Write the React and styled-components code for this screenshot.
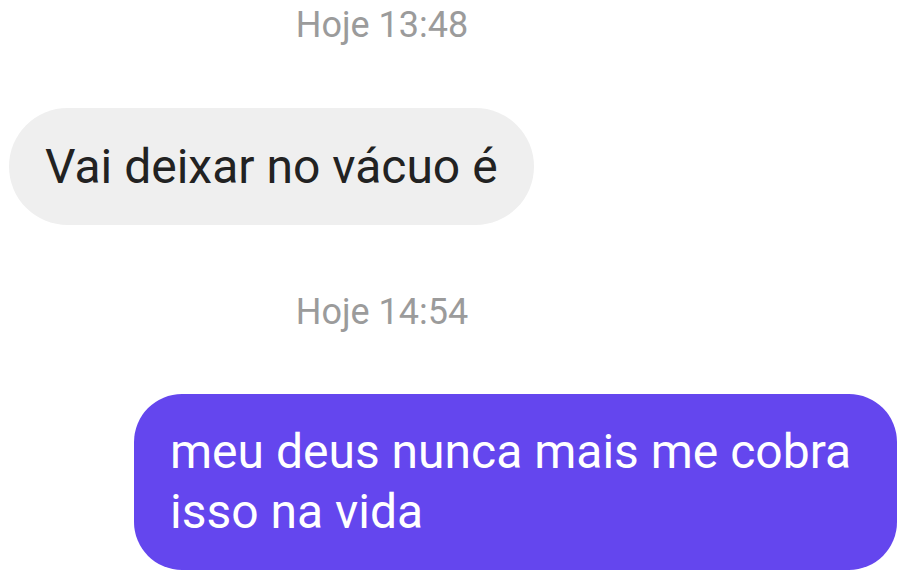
import React from "react";
import styled, { createGlobalStyle } from "styled-components";

const Global = createGlobalStyle`
  html, body { margin: 0; padding: 0; background: #ffffff; }
  body { font-family: Roboto, "Noto Sans", "Liberation Sans", sans-serif; }
`;

const Thread = styled.div`
  display: flex;
  flex-direction: column;
  width: 921px;
  height: 585px;
  overflow: hidden;
  padding-top: 4px;
  box-sizing: border-box;
`;

const Stamp = styled.div`
  font-size: 36px;
  line-height: 1.2;
  color: #9b9b9b;
  text-align: center;
  padding-right: 157px;
  margin-top: ${(p) => p.$top || 0}px;
`;

const Row = styled.div`
  display: flex;
  justify-content: ${(p) => (p.$mine ? "flex-end" : "flex-start")};
  padding: ${(p) => (p.$mine ? "0 24px 0 0" : "0 0 0 9px")};
  margin-top: ${(p) => p.$top || 0}px;
`;

const Bubble = styled.div`
  box-sizing: border-box;
  max-width: 763px;
  font-size: 48px;
  line-height: ${(p) => (p.$mine ? "60px" : "57px")};
  padding: ${(p) => (p.$mine ? "28px 36px" : "30px 36px")};
  border-radius: ${(p) => (p.$mine ? "48px" : "60px")};
  background: ${(p) => (p.$mine ? "#6446ee" : "#efefef")};
  color: ${(p) => (p.$mine ? "#ffffff" : "#222222")};
`;

export default function App() {
  return (
    <>
      <Global />
      <Thread>
        <Stamp>Hoje 13:48</Stamp>
        <Row $top={61}>
          <Bubble>Vai deixar no vácuo é</Bubble>
        </Row>
        <Stamp $top={66}>Hoje 14:54</Stamp>
        <Row $mine $top={60}>
          <Bubble $mine>meu deus nunca mais me cobra isso na vida</Bubble>
        </Row>
      </Thread>
    </>
  );
}
